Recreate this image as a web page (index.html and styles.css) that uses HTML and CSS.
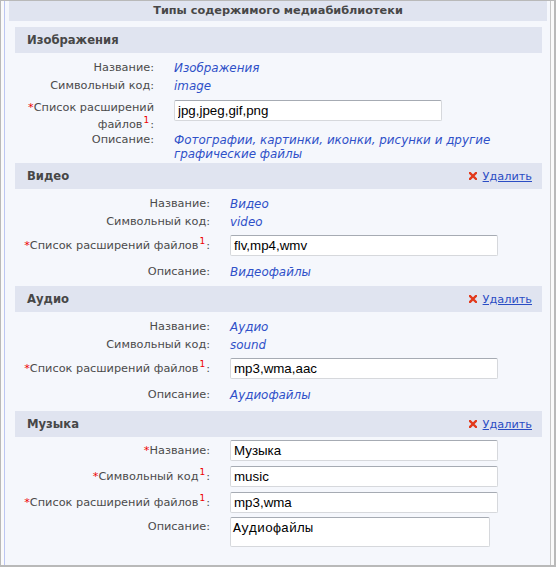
FILE: index.html
```html
<!DOCTYPE html>
<html>
<head>
<meta charset="utf-8">
<link rel="stylesheet" href="styles.css">
</head>
<body>
<div class="frame">
  <div class="inner">
    <div class="title">Типы содержимого медиабиблиотеки</div>

    <div class="section sec-img">
      <div class="sec-head"><span class="sec-name">Изображения</span></div>
      <div class="fields">
        <div class="field"><div class="lbl">Название:</div><div class="val">Изображения</div></div>
        <div class="field"><div class="lbl">Символьный код:</div><div class="val">image</div></div>
        <div class="field wrap"><div class="lbl"><span class="req">*</span>Список расширений файлов<sup>1</sup>:</div><div class="val"><input class="inp" type="text" value="jpg,jpeg,gif,png"></div></div>
        <div class="field desc"><div class="lbl">Описание:</div><div class="val">Фотографии, картинки, иконки, рисунки и другие графические файлы</div></div>
      </div>
    </div>

    <div class="section">
      <div class="sec-head"><span class="sec-name">Видео</span><a class="del" href="#"><svg class="x" width="8" height="8" viewBox="0 0 8 8"><path d="M1 1L7 7M7 1L1 7" stroke="#e2391b" stroke-width="2.4" stroke-linecap="square"/></svg><span class="del-txt">Удалить</span></a></div>
      <div class="fields">
        <div class="field"><div class="lbl">Название:</div><div class="val">Видео</div></div>
        <div class="field"><div class="lbl">Символьный код:</div><div class="val">video</div></div>
        <div class="field inprow"><div class="lbl"><span class="req">*</span>Список расширений файлов<sup>1</sup>:</div><div class="val"><input class="inp" type="text" value="flv,mp4,wmv"></div></div>
        <div class="field"><div class="lbl">Описание:</div><div class="val">Видеофайлы</div></div>
      </div>
    </div>

    <div class="section">
      <div class="sec-head"><span class="sec-name">Аудио</span><a class="del" href="#"><svg class="x" width="8" height="8" viewBox="0 0 8 8"><path d="M1 1L7 7M7 1L1 7" stroke="#e2391b" stroke-width="2.4" stroke-linecap="square"/></svg><span class="del-txt">Удалить</span></a></div>
      <div class="fields">
        <div class="field"><div class="lbl">Название:</div><div class="val">Аудио</div></div>
        <div class="field"><div class="lbl">Символьный код:</div><div class="val">sound</div></div>
        <div class="field inprow"><div class="lbl"><span class="req">*</span>Список расширений файлов<sup>1</sup>:</div><div class="val"><input class="inp" type="text" value="mp3,wma,aac"></div></div>
        <div class="field"><div class="lbl">Описание:</div><div class="val">Аудиофайлы</div></div>
      </div>
    </div>

    <div class="section sec-edit">
      <div class="sec-head"><span class="sec-name">Музыка</span><a class="del" href="#"><svg class="x" width="8" height="8" viewBox="0 0 8 8"><path d="M1 1L7 7M7 1L1 7" stroke="#e2391b" stroke-width="2.4" stroke-linecap="square"/></svg><span class="del-txt">Удалить</span></a></div>
      <div class="fields">
        <div class="field edit"><div class="lbl"><span class="req">*</span>Название:</div><div class="val"><input class="inp" type="text" value="Музыка"></div></div>
        <div class="field edit"><div class="lbl"><span class="req">*</span>Символьный код<sup>1</sup>:</div><div class="val"><input class="inp" type="text" value="music"></div></div>
        <div class="field edit last"><div class="lbl"><span class="req">*</span>Список расширений файлов<sup>1</sup>:</div><div class="val"><input class="inp" type="text" value="mp3,wma"></div></div>
        <div class="field area"><div class="lbl">Описание:</div><div class="val"><textarea class="ta">Аудиофайлы</textarea></div></div>
      </div>
    </div>
  </div>
</div>
</body>
</html>
```

FILE: styles.css
```css
html, body {
  margin: 0;
  padding: 0;
  background: #ffffff;
}

body {
  font-family: "DejaVu Sans", Verdana, sans-serif;
  font-size: 11.3px;
  color: #4b4b4b;
}

.frame {
  width: 556px;
  box-sizing: border-box;
  border-top: 1px solid #b9b9b9;
  border-left: 1px solid #b9b9b9;
  border-right: 2px solid #b9b9b9;
  border-bottom: 2px solid #b9b9b9;
  padding: 0 3px;
  background: #fafafa;
}

.inner {
  border-left: 1px solid #bcc6f2;
  border-right: 1px solid #c6c6c6;
  background: #f5f7fc;
  padding: 0 3px 18px 4px;
}

.title {
  height: 20px;
  line-height: 20px;
  background: #e0e4f0;
  text-align: center;
  font-weight: bold;
  color: #474747;
}

.section {
  margin: 6px 5px 0 6px;
}

.sec-head {
  height: 26px;
  background: #e0e4f0;
  display: flex;
  align-items: center;
  padding: 0 10px 0 12px;
}

.sec-name {
  font-weight: bold;
  font-size: 11.6px;
  color: #474747;
  flex: 1;
}

.del {
  display: flex;
  align-items: center;
  color: #2b4dc4;
  text-decoration: none;
}

.x {
  display: block;
  margin-right: 6px;
}

.del-txt {
  text-decoration: underline;
}

.fields {
  margin-top: 5px;
}

.field {
  display: flex;
  align-items: center;
  padding: 3px 0 1px;
  line-height: 14px;
}

.lbl {
  width: 195px;
  flex: none;
  text-align: right;
}

.val {
  margin-left: 20px;
  flex: 1;
  font-style: italic;
  font-size: 11.9px;
  color: #2f50c8;
}

.req {
  color: #ee0000;
}

sup {
  color: #ee0000;
  font-size: 9px;
  line-height: 0;
  vertical-align: 5px;
  margin: 0 1px 0 1px;
}

.inp {
  display: block;
  width: 268px;
  height: 21px;
  box-sizing: border-box;
  margin: 0;
  padding: 0 3px;
  border: 1px solid #d6d8dc;
  border-top-color: #a6abb3;
  border-radius: 2px;
  background: #ffffff;
  font-family: "Liberation Sans", Arial, sans-serif;
  font-size: 13.33px;
  font-style: normal;
  color: #000000;
  outline: none;
}

.ta {
  display: block;
  width: 260px;
  height: 30px;
  box-sizing: border-box;
  margin: 0;
  padding: 3px 2px 2px;
  border: 1px solid #d6d8dc;
  border-top-color: #a6abb3;
  border-radius: 2px;
  background: #ffffff;
  font-family: "Liberation Mono", "Courier New", monospace;
  font-size: 13.33px;
  line-height: 16px;
  color: #000000;
  resize: none;
  overflow: hidden;
}

/* image section: narrow label column */
.sec-img .lbl {
  width: 139px;
}

.sec-img .fields {
  margin-bottom: -4px;
}

.field.wrap {
  align-items: flex-start;
  padding: 0;
}

.field.wrap .lbl {
  padding-top: 5px;
  line-height: 17px;
}

.field.wrap .val {
  padding-top: 6px;
}

.field.desc {
  align-items: flex-start;
  padding: 0;
}

.field.inprow {
  padding: 5px 0 6px;
}

.sec-edit {
  margin-top: 8px;
}

.sec-edit .fields {
  margin-top: 3px;
}

.field.edit {
  padding: 0 0 5px;
}

.field.edit.last {
  padding-bottom: 4px;
}

.field.area {
  align-items: flex-start;
  padding: 0;
}

.field.area .lbl {
  padding-top: 3px;
}
```
